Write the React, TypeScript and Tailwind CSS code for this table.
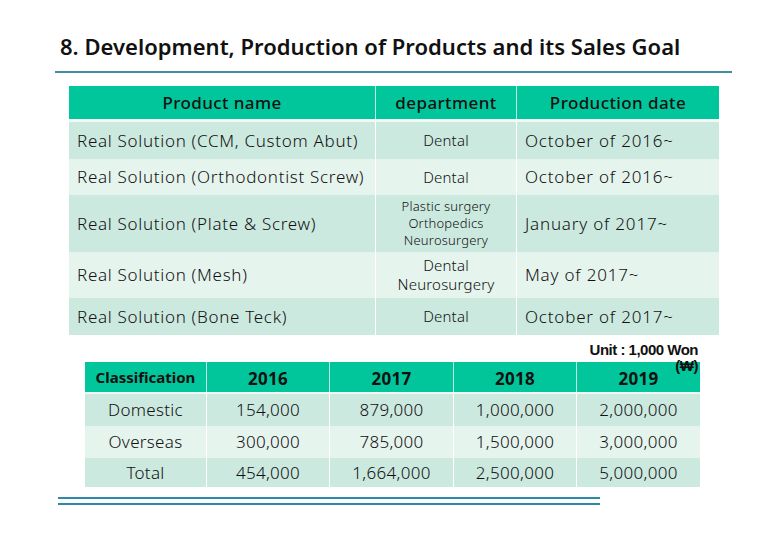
const products = [
  { name: 'Real Solution (CCM, Custom Abut)', dept: ['Dental'], deptSize: 'text-[15px]', date: 'October of 2016~', h: 'h-[37px]', dark: true },
  { name: 'Real Solution (Orthodontist Screw)', dept: ['Dental'], deptSize: 'text-[15px]', date: 'October of 2016~', h: 'h-[36px]', dark: false },
  { name: 'Real Solution (Plate & Screw)', dept: ['Plastic surgery', 'Orthopedics', 'Neurosurgery'], deptSize: 'text-[13px] leading-[17px]', date: 'January of 2017~', h: 'h-[57px]', dark: true },
  { name: 'Real Solution (Mesh)', dept: ['Dental', 'Neurosurgery'], deptSize: 'text-[15px] leading-[19px]', date: 'May of 2017~', h: 'h-[46px]', dark: false },
  { name: 'Real Solution (Bone Teck)', dept: ['Dental'], deptSize: 'text-[15px]', date: 'October of 2017~', h: 'h-[37px]', dark: true },
];

const sales = [
  { label: 'Domestic', values: ['154,000', '879,000', '1,000,000', '2,000,000'], h: 'h-[32px]', dark: true },
  { label: 'Overseas', values: ['300,000', '785,000', '1,500,000', '3,000,000'], h: 'h-[32px]', dark: false },
  { label: 'Total', values: ['454,000', '1,664,000', '2,500,000', '5,000,000'], h: 'h-[29px]', dark: true },
];

const years = ['2016', '2017', '2018', '2019'];

export default function App() {
  return (
    <div className="w-[780px] h-[540px] bg-white text-[#111] font-['Noto_Sans',sans-serif] flex flex-col overflow-hidden">
      <h1 className="pl-[60px] pt-[31px] text-[22px] leading-[30px] font-semibold tracking-[0.02px]">
        8. Development, Production of Products and its Sales Goal
      </h1>
      <div className="ml-[55px] mt-[10px] w-[677px] h-[2px] bg-[#3f8ea0]" />

      {/* products table */}
      <div className="ml-[69px] mt-[13px] w-[650px] flex flex-col">
        <div className="grid grid-cols-[307px_141px_202px] h-[33px] bg-[#02c69b] text-[17px] font-medium tracking-[0.4px]">
          <div className="flex items-center justify-center border-r border-[#bfeee0]">Product name</div>
          <div className="flex items-center justify-center border-r border-[#bfeee0]">department</div>
          <div className="flex items-center justify-center">Production date</div>
        </div>
        <div className="h-[3px] bg-[#f2faf7]" />
        {products.map(p => (
          <div key={p.name} className={`grid grid-cols-[307px_141px_202px] ${p.h} font-light ${p.dark ? 'bg-[#cce9df]' : 'bg-[#e6f4ee]'}`}>
            <div className="flex items-center pl-[8px] text-[17px] tracking-[0.7px] border-r border-white">{p.name}</div>
            <div className={`flex flex-col items-center justify-center text-center tracking-[0.2px] border-r border-white ${p.deptSize}`}>
              {p.dept.map(d => <span key={d}>{d}</span>)}
            </div>
            <div className="flex items-center pl-[8px] text-[17px] tracking-[0.8px]">{p.date}</div>
          </div>
        ))}
      </div>

      {/* sales table */}
      <div className="relative ml-[85px] mt-[27px] w-[615px] flex flex-col">
        <div className="absolute right-[2px] -top-[20px] w-[130px] text-right text-[15px] leading-[16px] font-bold font-['Liberation_Sans',sans-serif] tracking-[-0.5px] z-10">
          Unit : 1,000 Won<br />(₩)
        </div>
        <div className="grid grid-cols-[122px_123px_124px_123px_123px] h-[30px] bg-[#02c69b] font-bold">
          <div className="flex items-center justify-center text-[15px] border-r border-[#bfeee0]">Classification</div>
          {years.map((y, i) => (
            <div key={y} className={`flex items-center justify-center pt-[4px] text-[17px] tracking-[0.3px] ${i < 3 ? 'border-r border-[#bfeee0]' : ''}`}>{y}</div>
          ))}
        </div>
        <div className="h-[2px] bg-[#f2faf7]" />
        {sales.map(r => (
          <div key={r.label} className={`grid grid-cols-[122px_123px_124px_123px_123px] ${r.h} text-[17px] font-light tracking-[0.3px] ${r.dark ? 'bg-[#cce9df]' : 'bg-[#e6f4ee]'}`}>
            <div className="flex items-center justify-center border-r border-white">{r.label}</div>
            {r.values.map((v, i) => (
              <div key={i} className={`flex items-center justify-center ${i < 3 ? 'border-r border-white' : ''}`}>{v}</div>
            ))}
          </div>
        ))}
      </div>

      <div className="ml-[58px] mt-[10px] w-[542px] flex flex-col gap-[4px]">
        <div className="h-[2px] bg-[#2a8aa8]" />
        <div className="h-[2px] bg-[#2a8aa8]" />
      </div>
    </div>
  );
}
